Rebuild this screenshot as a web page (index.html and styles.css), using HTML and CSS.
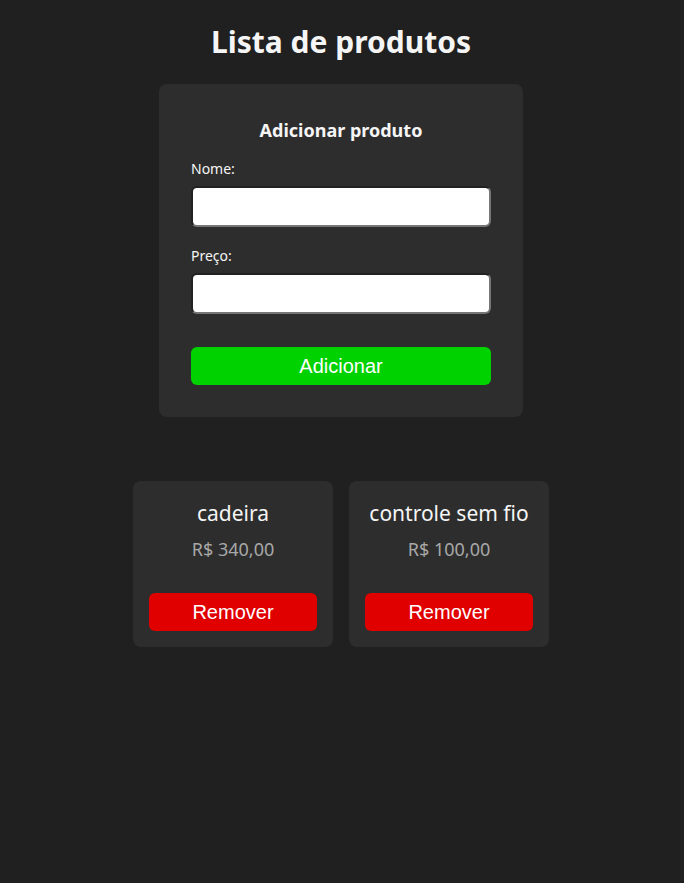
FILE: index.html
```html
<!DOCTYPE html>
<html lang="pt-BR">
<head>
<meta charset="utf-8">
<title>Lista de produtos</title>
<link rel="stylesheet" href="styles.css">
</head>
<body>
<main class="page">
  <h1 class="title">Lista de produtos</h1>
  <form class="form-card">
    <h2 class="form-title">Adicionar produto</h2>
    <label class="label" for="nome">Nome:</label>
    <input class="input" id="nome" type="text">
    <label class="label" for="preco">Preço:</label>
    <input class="input" id="preco" type="text">
    <button class="btn btn-add" type="button">Adicionar</button>
  </form>
  <section class="products">
    <div class="product">
      <div class="product-name">cadeira</div>
      <div class="product-price">R$ 340,00</div>
      <button class="btn btn-remove" type="button">Remover</button>
    </div>
    <div class="product">
      <div class="product-name">controle sem fio</div>
      <div class="product-price">R$ 100,00</div>
      <button class="btn btn-remove" type="button">Remover</button>
    </div>
  </section>
</main>
</body>
</html>
```
FILE: styles.css
```css
html, body {
  margin: 0;
  padding: 0;
  background: #202020;
  color: #f5f5f5;
  font-family: "Noto Sans", "Open Sans", sans-serif;
}
.page {
  display: flex;
  flex-direction: column;
  align-items: center;
  padding: 21px 2px 0 0;
}
.title {
  margin: 0 0 21px;
  font-size: 30px;
  line-height: 42px;
  font-weight: 700;
}
.form-card {
  width: 300px;
  background: #2d2d2d;
  border-radius: 8px;
  padding: 32px;
  display: flex;
  flex-direction: column;
}
.form-title {
  margin: 0 0 15px;
  text-align: center;
  font-size: 18px;
  line-height: 28px;
  font-weight: 700;
}
.label {
  font-size: 14px;
  line-height: 20px;
  margin-bottom: 7px;
}
.input {
  box-sizing: border-box;
  width: 300px;
  height: 41px;
  margin: 0 0 19px;
  border: 2px inset #767676;
  border-radius: 6px;
  background: #fff;
}
.btn {
  border: none;
  border-radius: 6px;
  color: #fff;
  font-family: "Liberation Sans", Arial, sans-serif;
  font-size: 20px;
  height: 38px;
  cursor: pointer;
}
.btn-add {
  margin-top: 14px;
  width: 300px;
  background: #00d200;
}
.products {
  margin-top: 64px;
  display: flex;
  gap: 16px;
}
.product {
  width: 168px;
  background: #2d2d2d;
  border-radius: 8px;
  padding: 16px 16px 16px;
  display: flex;
  flex-direction: column;
  align-items: center;
}
.product-name {
  font-size: 21px;
  line-height: 32px;
}
.product-price {
  margin-top: 7px;
  font-size: 18px;
  line-height: 26px;
  color: #a8a8a8;
}
.btn-remove {
  margin-top: 31px;
  width: 168px;
  background: #e00000;
}
```
